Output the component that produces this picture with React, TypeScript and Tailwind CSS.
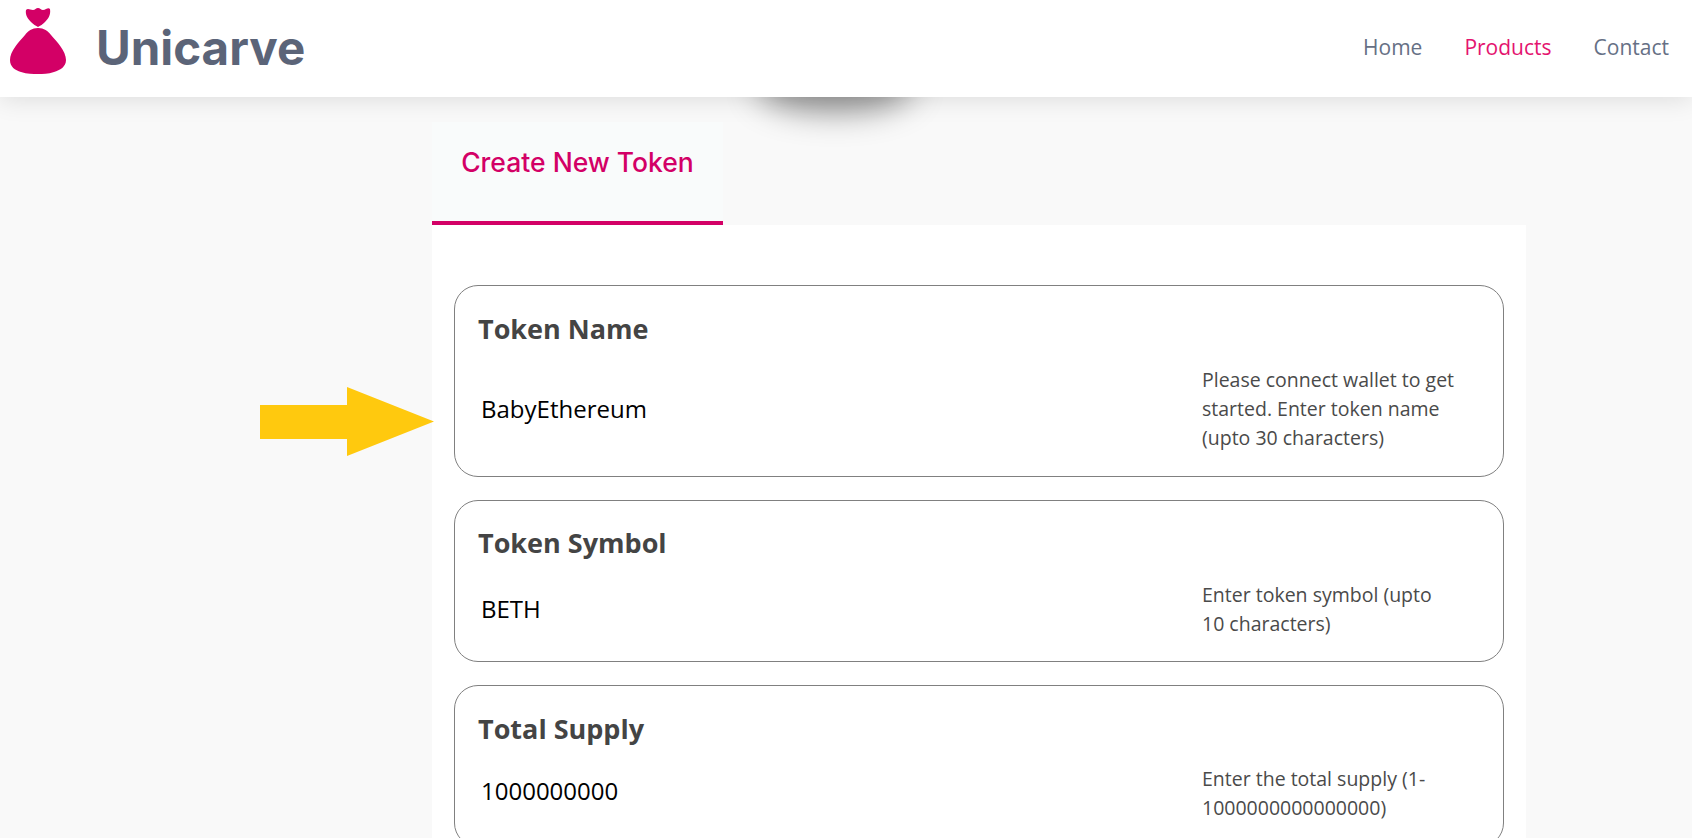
const fields = [
  {
    label: "Token Name",
    value: "BabyEthereum",
    help: "Please connect wallet to get started. Enter token name (upto 30 characters)",
    card: "pt-[27px] pb-[24px]",
    title: "mb-[20px]",
    input: "",
  },
  {
    label: "Token Symbol",
    value: "BETH",
    help: "Enter token symbol (upto 10 characters)",
    card: "pt-[26px] pb-[23px]",
    title: "mb-[21px]",
    input: "",
  },
  {
    label: "Total Supply",
    value: "1000000000",
    help: "Enter the total supply (1-1000000000000000)",
    card: "pt-[27px] pb-[24px]",
    title: "mb-[19px]",
    input: "mb-[4px]",
  },
];

function Logo() {
  return (
    <svg viewBox="0 0 56 67" className="w-[56px] h-[67px] shrink-0 mb-[14px]" fill="#d30066">
      <path d="M16 3C18 1 20 3 23 3C25 3 26 1 28 1C30 1 31 3 33 3C36 3 38 0 40 2C41 8 38 12 35 15C33 17 30 19 28 20C26 19 23 17 21 15C18 12 15 8 16 3z" />
      <path d="M28 21C34 21 38 24 41 28C47 35 56 44 56 53C56 60 50 63 44 65C38 67 33 67 28 67C23 67 17 67 11 65C5 63 0 60 0 53C0 44 9 35 15 28C18 24 22 21 28 21z" />
    </svg>
  );
}

export default function App() {
  return (
    <div className="relative h-[838px] overflow-hidden bg-[#f9f9f9] font-['Open_Sans',sans-serif]">
      <header className="relative z-20 flex items-center justify-between h-[97px] bg-white pl-[10px] pr-[23px] shadow-[0_2px_24px_rgba(0,0,0,0.12)]">
        <div className="flex items-center gap-[30px] -mt-[2px]">
          <Logo />
          <span className="font-['Inter',sans-serif] font-bold text-[47.5px] leading-none text-[#5b6478]">Unicarve</span>
        </div>
        <nav className="flex gap-[42px] text-[21px] text-[#667085] -mt-[2px]">
          <a>Home</a>
          <a className="text-[#e4146f]">Products</a>
          <a>Contact</a>
        </nav>
      </header>

      {/* blurry smudge under the header */}
      <div className="absolute z-10 left-[765px] top-[60px] w-[140px] h-[36px] rounded-[50%] bg-[#888] shadow-[0_8px_32px_8px_rgba(0,0,0,0.42)]" />

      <main className="relative ml-[432px] w-[1094px] pt-[25px]">
        <div className="flex items-center justify-center w-[291px] h-[103px] pb-[18px] border-b-4 border-[#d30066] bg-[#f9fbfb] font-['Inter',sans-serif] font-medium text-[26.5px] text-[#d30066]">
          Create New Token
        </div>
        <div className="bg-white px-[22px] pt-[60px] flex flex-col gap-[23px]">
          {fields.map((field) => (
            <div key={field.label} className={`border border-[#808080] rounded-[24px] pl-[23px] pr-[40px] ${field.card}`}>
              <h3 className={`text-[27px] leading-[32px] font-bold text-[#444] ${field.title}`}>{field.label}</h3>
              <div className="flex items-center justify-between">
                <span className={`pl-[3px] text-[24px] text-black ${field.input}`}>{field.value}</span>
                <p className="w-[261px] pr-[6px] text-[19.5px] leading-[29px] text-[#4a4a4a]">{field.help}</p>
              </div>
            </div>
          ))}
        </div>
      </main>

      {/* yellow arrow pasted over the page */}
      <svg viewBox="0 0 174 69" className="absolute left-[260px] top-[387px] w-[174px] h-[69px]" fill="#ffc90e">
        <path d="M0 18h87V0l87 34.5L87 69V52H0z" />
      </svg>
    </div>
  );
}
